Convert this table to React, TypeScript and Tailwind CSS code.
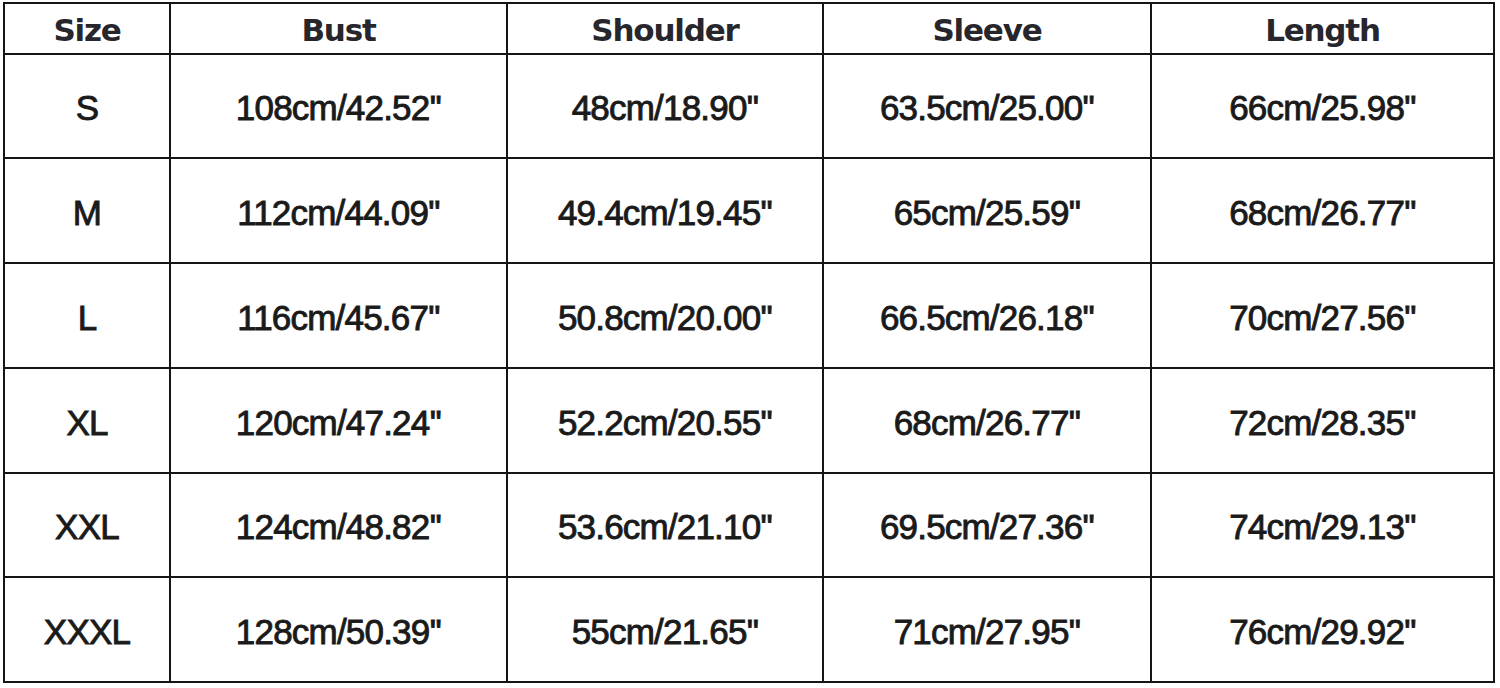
const headers = ['Size', 'Bust', 'Shoulder', 'Sleeve', 'Length']

const rows = [
  ['S', "108cm/42.52''", "48cm/18.90''", "63.5cm/25.00''", "66cm/25.98''"],
  ['M', "112cm/44.09''", "49.4cm/19.45''", "65cm/25.59''", "68cm/26.77''"],
  ['L', "116cm/45.67''", "50.8cm/20.00''", "66.5cm/26.18''", "70cm/27.56''"],
  ['XL', "120cm/47.24''", "52.2cm/20.55''", "68cm/26.77''", "72cm/28.35''"],
  ['XXL', "124cm/48.82''", "53.6cm/21.10''", "69.5cm/27.36''", "74cm/29.13''"],
  ['XXXL', "128cm/50.39''", "55cm/21.65''", "71cm/27.95''", "76cm/29.92''"],
]

export default function App() {
  return (
    <div className="w-[1500px] h-[688px] bg-white pt-[2px] pl-[3px]">
      <div className="grid w-[1492px] grid-cols-[164px_335px_314px_326px_341px] grid-rows-[49px_102px_103px_103px_103px_102px_103px] gap-[2px] border-2 border-[#151515] bg-[#151515]">
        {headers.map((h) => (
          <div
            key={h}
            className="flex items-center justify-center bg-white pt-[4px] font-['DejaVu_Sans',sans-serif] text-[31px] font-bold tracking-[-1.2px] text-[#26262c]"
          >
            {h}
          </div>
        ))}
        {rows.map((r) =>
          r.map((c, i) => (
            <div
              key={r[0] + i}
              className="flex items-center justify-center bg-white pt-[5px] font-['Liberation_Sans',Arial,sans-serif] text-[35px] tracking-[-0.8px] text-[#1a1a1a] [-webkit-text-stroke:0.9px_#1a1a1a]"
            >
              {c}
            </div>
          ))
        )}
      </div>
    </div>
  )
}
